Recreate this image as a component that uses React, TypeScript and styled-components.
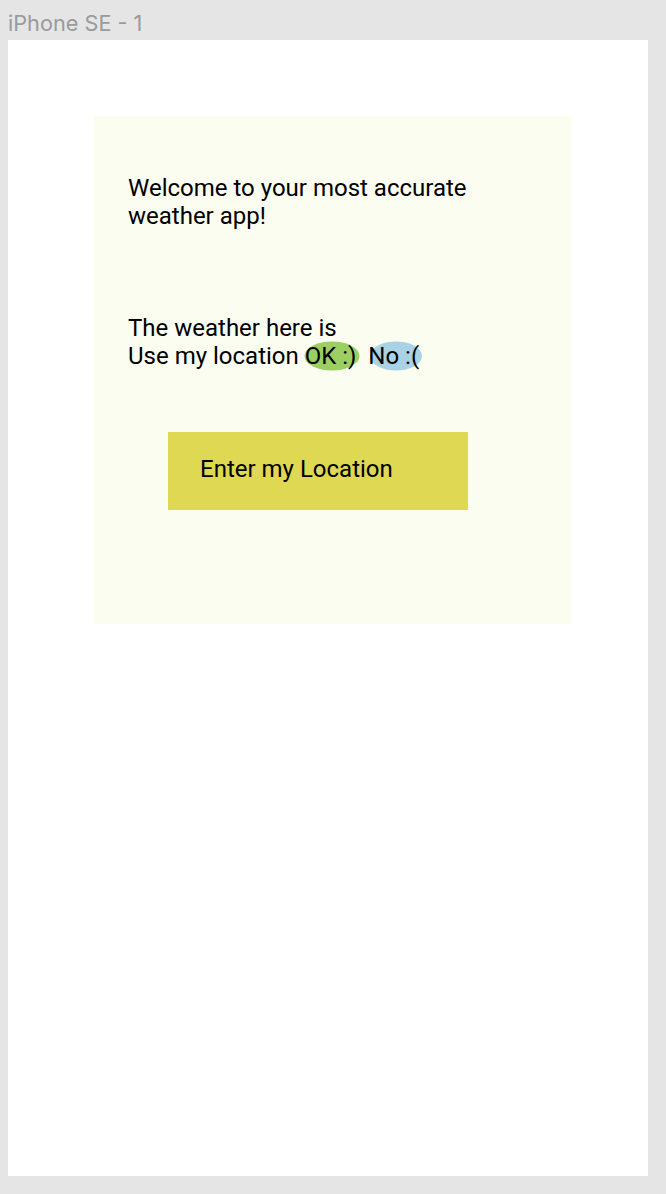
import React from "react";
import styled, { createGlobalStyle } from "styled-components";

const Global = createGlobalStyle`
  html, body { margin: 0; padding: 0; background: #e5e5e5; }
  body { width: 666px; height: 1194px; overflow: hidden; }
`;

const Canvas = styled.div`
  width: 666px;
  height: 1194px;
  background: #e5e5e5;
  padding: 0 8px;
  box-sizing: border-box;
  display: flex;
  flex-direction: column;
`;

const FrameLabel = styled.div`
  font-family: Inter, "Liberation Sans", sans-serif;
  font-size: 21.7px;
  color: #9a9a9a;
  height: 40px;
  line-height: 46px;
  box-sizing: border-box;
`;

const Frame = styled.div`
  width: 640px;
  height: 1136px;
  background: #ffffff;
  padding: 76px 0 0 86px;
  box-sizing: border-box;
`;

const Card = styled.div`
  width: 478px;
  height: 508px;
  background: #fbfdf1;
  box-sizing: border-box;
  padding: 58px 0 0 34px;
  font-family: Roboto, "Liberation Sans", sans-serif;
  font-size: 24px;
  line-height: 28px;
  color: #000;
  display: flex;
  flex-direction: column;
`;

const Text = styled.div`
  margin: 0;
  white-space: nowrap;
`;

const Spacer = styled.div<{ $h: number }>`
  height: ${(p) => p.$h}px;
`;

const Choice = styled.span<{ $bg: string; $w: number; $dx: number }>`
  position: relative;
  display: inline-block;
  &::before {
    content: "";
    position: absolute;
    left: calc(50% + ${(p) => p.$dx}px);
    top: 50%;
    width: ${(p) => p.$w}px;
    height: 29px;
    transform: translate(-50%, -50%);
    border-radius: 50%;
    background: ${(p) => p.$bg};
    z-index: 0;
  }
  & > span { position: relative; z-index: 1; }
`;

const Button = styled.div`
  margin-left: 40px;
  width: 300px;
  height: 78px;
  background: #dfd853;
  box-sizing: border-box;
  padding: 0 0 4px 32px;
  display: flex;
  align-items: center;
`;

export default function App() {
  return (
    <>
      <Global />
      <Canvas>
        <FrameLabel>iPhone SE - 1</FrameLabel>
        <Frame>
          <Card>
            <Text>
              Welcome to your most accurate
              <br />
              weather app!
            </Text>
            <Spacer $h={84} />
            <Text>The weather here is</Text>
            <Text>
              Use my location{" "}
              <Choice $bg="#9ccf62" $w={55} $dx={1}>
                <span>OK :)</span>
              </Choice>
              {"\u00a0\u00a0"}
              <Choice $bg="#a9d3e5" $w={52} $dx={2}>
                <span>No :(</span>
              </Choice>
            </Text>
            <Spacer $h={62} />
            <Button>Enter my Location</Button>
          </Card>
        </Frame>
      </Canvas>
    </>
  );
}
